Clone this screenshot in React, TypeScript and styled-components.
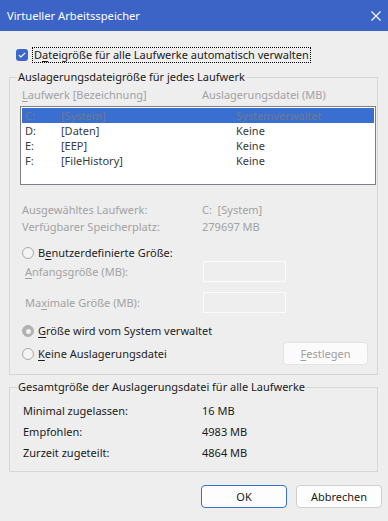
import styled, { createGlobalStyle } from "styled-components";

const GlobalStyle = createGlobalStyle`
  html, body {
    margin: 0;
    padding: 0;
    background: #eeeeee;
  }
  * { box-sizing: border-box; }
`;

const font = `"Noto Sans", "Open Sans", "Liberation Sans", sans-serif`;

const Window = styled.div`
  width: 388px;
  height: 521px;
  background: #eeeeee;
  font-family: ${font};
  font-size: 11px;
  color: #1a1a1a;
  display: flex;
  flex-direction: column;
  overflow: hidden;
`;

const TitleBar = styled.div`
  height: 31px;
  background: #3c64c6;
  color: #ffffff;
  display: flex;
  align-items: center;
  justify-content: space-between;
  padding: 0 7px 0 7px;
  flex-shrink: 0;
`;

const Title = styled.span`
  font-size: 11.2px;
  line-height: 16px;
`;

const Content = styled.div`
  padding-left: 9px;
  display: flex;
  flex-direction: column;
`;

const CheckRow = styled.label`
  margin-top: 16px;
  height: 16px;
  display: flex;
  align-items: center;
  padding-left: 7px;
`;

const CheckBox = styled.span`
  width: 12px;
  height: 12px;
  border-radius: 3px;
  background: #3c68c8;
  display: flex;
  align-items: center;
  justify-content: center;
  margin-right: 4px;
`;

const FocusLabel = styled.span`
  border: 1px dotted #000;
  height: 16px;
  line-height: 14px;
  padding: 0 1px 0 1px;
  white-space: nowrap;
`;

const Group = styled.fieldset<{ $top: number; $bottom: number }>`
  margin: ${(p) => p.$top}px 10px 0 0;
  padding: 0 0 ${(p) => p.$bottom}px 0;
  border: 1px solid #d7d7d7;
  min-width: 0;
`;

const Legend = styled.legend`
  margin-left: 7px;
  padding: 0 1px;
  line-height: 16px;
  color: #1a1a1a;
`;

const Key = styled.span`
  text-decoration: underline;
  text-underline-offset: 2px;
`;

const HeaderRow = styled.div`
  margin-top: 2px;
  height: 16px;
  line-height: 16px;
  display: grid;
  grid-template-columns: 180px 1fr;
  padding-left: 12px;
  color: #a2a2a2;
`;

const ListBox = styled.div`
  margin: 3px 0 0 10px;
  width: 356px;
  height: 79px;
  border: 1px solid #7e7e86;
  background: #ffffff;
  padding: 1px;
`;

const ListRow = styled.div<{ $selected?: boolean }>`
  height: 15px;
  line-height: 15px;
  display: grid;
  grid-template-columns: 36px 175px 1fr;
  padding-left: 3px;
  background: ${(p) => (p.$selected ? "#3a6fd2" : "transparent")};
  color: ${(p) => (p.$selected ? "#6e7890" : "#3a3a3a")};
`;

const InfoRow = styled.div<{ $top: number }>`
  margin-top: ${(p) => p.$top}px;
  height: 16px;
  line-height: 16px;
  display: grid;
  grid-template-columns: 180px 1fr;
  padding-left: 12px;
  color: #a2a2a2;
`;

const RadioRow = styled.div<{ $top: number; $height?: number }>`
  margin-top: ${(p) => p.$top}px;
  height: ${(p) => p.$height ?? 16}px;
  display: flex;
  align-items: center;
  padding-left: 12px;
  padding-right: 9px;
`;

const Radio = styled.span<{ $checked?: boolean }>`
  width: 12px;
  height: 12px;
  border-radius: 50%;
  flex-shrink: 0;
  margin-right: 4px;
  border: 1px solid ${(p) => (p.$checked ? "#b2b2b2" : "#a9a9a9")};
  background: ${(p) => (p.$checked ? "#b2b2b2" : "#f4f4f4")};
  display: flex;
  align-items: center;
  justify-content: center;
  &::after {
    content: "";
    display: ${(p) => (p.$checked ? "block" : "none")};
    width: 5px;
    height: 5px;
    border-radius: 50%;
    background: #f2f2f2;
  }
`;

const RadioLabel = styled.span`
  line-height: 16px;
  color: #1e1e1e;
  flex: 1;
`;

const FieldRow = styled.div<{ $top: number }>`
  margin-top: ${(p) => p.$top}px;
  height: 21px;
  display: grid;
  grid-template-columns: 178px 83px;
  align-items: center;
  padding-left: 15px;
  color: #a2a2a2;
`;

const TextInput = styled.div`
  height: 21px;
  border: 1px solid #fbfbfb;
  background: #eeeeee;
`;

const SmallButton = styled.button`
  width: 85px;
  height: 23px;
  border-radius: 4px;
  border: 1px solid #e4e4e4;
  background: #fbfbfb;
  color: #a0a0a0;
  font-family: ${font};
  font-size: 11px;
  padding: 0;
`;

const TotalRow = styled.div<{ $top: number }>`
  margin-top: ${(p) => p.$top}px;
  height: 21px;
  line-height: 21px;
  display: grid;
  grid-template-columns: 179px 1fr;
  padding-left: 13px;
  color: #1a1a1a;
`;

const ButtonRow = styled.div`
  margin-top: 13px;
  margin-right: 6px;
  display: flex;
  justify-content: flex-end;
  gap: 9px;
`;

const DialogButton = styled.button<{ $default?: boolean }>`
  width: 86px;
  height: 23px;
  border-radius: 4px;
  border: 1px solid ${(p) => (p.$default ? "#3a6fd0" : "#d0d0d0")};
  background: #fdfdfd;
  color: #1a1a1a;
  font-family: ${font};
  font-size: 11px;
  padding: 0;
`;

const drives = [
  { letter: "C:", name: "[System]", file: "Systemverwaltet" },
  { letter: "D:", name: "[Daten]", file: "Keine" },
  { letter: "E:", name: "[EEP]", file: "Keine" },
  { letter: "F:", name: "[FileHistory]", file: "Keine" },
];

const totals = [
  { label: "Minimal zugelassen:", value: "16 MB" },
  { label: "Empfohlen:", value: "4983 MB" },
  { label: "Zurzeit zugeteilt:", value: "4864 MB" },
];

export default function App() {
  return (
    <>
      <GlobalStyle />
      <Window>
        <TitleBar>
          <Title>Virtueller Arbeitsspeicher</Title>
          <svg width="10" height="10" viewBox="0 0 10 10">
            <path d="M0.5 0.5 L9.5 9.5 M9.5 0.5 L0.5 9.5" stroke="#fff" strokeWidth="1.1" />
          </svg>
        </TitleBar>
        <Content>
          <CheckRow>
            <CheckBox>
              <svg width="8" height="6" viewBox="0 0 8 6">
                <path d="M0.8 3.2 L2.9 5 L7.2 0.8" fill="none" stroke="#fff" strokeWidth="1.1" />
              </svg>
            </CheckBox>
            <FocusLabel>
              D<Key>a</Key>teigröße für alle Laufwerke automatisch verwalten
            </FocusLabel>
          </CheckRow>

          <Group $top={6} $bottom={9}>
            <Legend>Auslagerungsdateigröße für jedes Laufwerk</Legend>
            <HeaderRow>
              <span>
                <Key>L</Key>aufwerk [Bezeichnung]
              </span>
              <span>Auslagerungsdatei (MB)</span>
            </HeaderRow>
            <ListBox>
              {drives.map((d, i) => (
                <ListRow key={d.letter} $selected={i === 0}>
                  <span>{d.letter}</span>
                  <span>{d.name}</span>
                  <span>{d.file}</span>
                </ListRow>
              ))}
            </ListBox>
            <InfoRow $top={17}>
              <span>Ausgewähltes Laufwerk:</span>
              <span>C:&nbsp; [System]</span>
            </InfoRow>
            <InfoRow $top={1}>
              <span>Verfügbarer Speicherplatz:</span>
              <span>279697 MB</span>
            </InfoRow>
            <RadioRow $top={10}>
              <Radio />
              <RadioLabel>
                B<Key>e</Key>nutzerdefinierte Größe:
              </RadioLabel>
            </RadioRow>
            <FieldRow $top={0}>
              <span>
                <Key>A</Key>nfangsgröße (MB):
              </span>
              <TextInput />
            </FieldRow>
            <FieldRow $top={10}>
              <span>
                Ma<Key>x</Key>imale Größe (MB):
              </span>
              <TextInput />
            </FieldRow>
            <RadioRow $top={10}>
              <Radio $checked />
              <RadioLabel>
                <Key>G</Key>röße wird vom System verwaltet
              </RadioLabel>
            </RadioRow>
            <RadioRow $top={3} $height={23}>
              <Radio />
              <RadioLabel>
                <Key>K</Key>eine Auslagerungsdatei
              </RadioLabel>
              <SmallButton>
                <Key>F</Key>estlegen
              </SmallButton>
            </RadioRow>
          </Group>

          <Group $top={4} $bottom={8}>
            <Legend>Gesamtgröße der Auslagerungsdatei für alle Laufwerke</Legend>
            {totals.map((t, i) => (
              <TotalRow key={t.label} $top={i === 0 ? 5 : 0}>
                <span>{t.label}</span>
                <span>{t.value}</span>
              </TotalRow>
            ))}
          </Group>

          <ButtonRow>
            <DialogButton $default>OK</DialogButton>
            <DialogButton>Abbrechen</DialogButton>
          </ButtonRow>
        </Content>
      </Window>
    </>
  );
}
